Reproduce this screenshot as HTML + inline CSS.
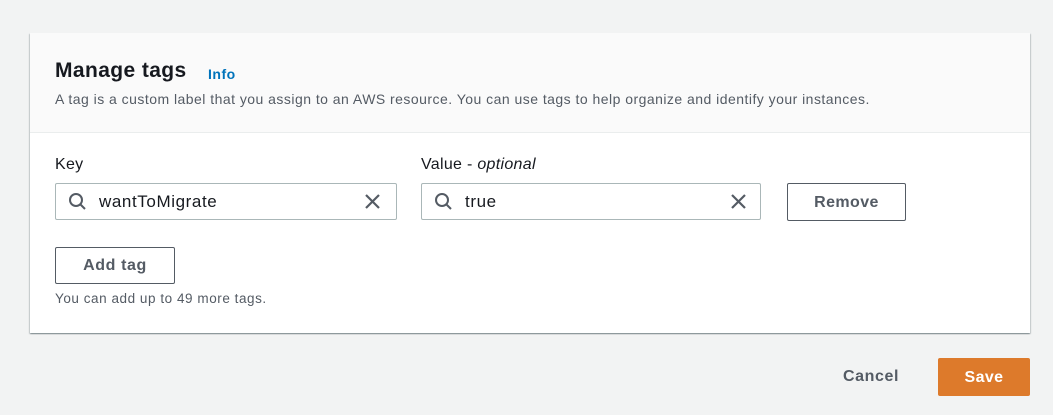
<!DOCTYPE html>
<html><head><style>
body{margin:0;width:1053px;height:415px;background:#f2f3f3;font-family:"Liberation Sans",sans-serif;position:relative;overflow:hidden}
.card{position:absolute;left:30px;top:33px;width:1000px;height:300px;background:#fff;box-shadow:0 1px 1px rgba(0,28,36,.3),1px 1px 1px rgba(0,28,36,.15),-1px 1px 1px rgba(0,28,36,.15)}
.hdr{position:absolute;left:0;top:0;width:1000px;height:99px;background:#fafafa;border-bottom:1px solid #eaeded}
.a{position:absolute;white-space:nowrap}
.inp{position:absolute;height:37px;border:1px solid #aab7b8;border-radius:2px;background:#fff;box-sizing:border-box}
.btn{position:absolute;box-sizing:border-box;border:1px solid #545b64;border-radius:2px;background:#fff;color:#545b64;font-weight:bold;font-size:16px;letter-spacing:0.4px;text-align:center}
</style></head><body>
<div class="card">
<div class="hdr"></div>
<div class="a" style="left:25px;top:26px;font-size:21px;letter-spacing:0.4px;font-weight:bold;color:#16191f">Manage tags</div>
<div class="a" style="left:178px;top:33px;font-size:14px;letter-spacing:0.5px;font-weight:bold;color:#0073bb">Info</div>
<div class="a" style="left:25px;top:58px;font-size:14px;letter-spacing:0.47px;color:#545b64">A tag is a custom label that you assign to an AWS resource. You can use tags to help organize and identify your instances.</div>
<div class="a" style="left:25px;top:123px;font-size:16px;letter-spacing:0.3px;color:#16191f">Key</div>
<div class="a" style="left:391px;top:123px;font-size:16px;letter-spacing:0.3px;color:#16191f">Value - <i>optional</i></div>
</div>
<div class="inp" style="left:55px;top:183px;width:342px"></div>
<div class="inp" style="left:421px;top:183px;width:340px"></div>
<svg class="a" style="left:68px;top:192px" width="20" height="20" viewBox="0 0 20 20"><circle cx="8" cy="8" r="6" fill="none" stroke="#545b64" stroke-width="2"/><path d="M12.5 12.5L17 17" stroke="#545b64" stroke-width="2"/></svg>
<svg class="a" style="left:434px;top:192px" width="20" height="20" viewBox="0 0 20 20"><circle cx="8" cy="8" r="6" fill="none" stroke="#545b64" stroke-width="2"/><path d="M12.5 12.5L17 17" stroke="#545b64" stroke-width="2"/></svg>
<div class="a" style="left:99px;top:192px;font-size:17px;letter-spacing:0.6px;color:#16191f">wantToMigrate</div>
<div class="a" style="left:465px;top:192px;font-size:17px;letter-spacing:0.6px;color:#16191f">true</div>
<svg class="a" style="left:364px;top:193px" width="17" height="17"><path d="M2 2L15 15M15 2L2 15" stroke="#545b64" stroke-width="2.2"/></svg>
<svg class="a" style="left:730px;top:193px" width="17" height="17"><path d="M2 2L15 15M15 2L2 15" stroke="#545b64" stroke-width="2.2"/></svg>
<div class="btn" style="left:787px;top:183px;width:119px;height:38px;line-height:37px">Remove</div>
<div class="btn" style="left:55px;top:247px;width:120px;height:37px;line-height:36px;letter-spacing:0.6px">Add tag</div>
<div class="a" style="left:55px;top:291px;font-size:13.5px;letter-spacing:0.55px;color:#545b64">You can add up to 49 more tags.</div>
<div class="a" style="left:843px;top:368px;font-size:16px;font-weight:bold;letter-spacing:0.6px;color:#545b64">Cancel</div>
<div class="a" style="left:938px;top:358px;width:92px;height:38px;background:#dd7a2b;border-radius:2px;color:#fff;font-weight:bold;font-size:16px;letter-spacing:0.4px;text-align:center;line-height:39px">Save</div>
</body></html>
